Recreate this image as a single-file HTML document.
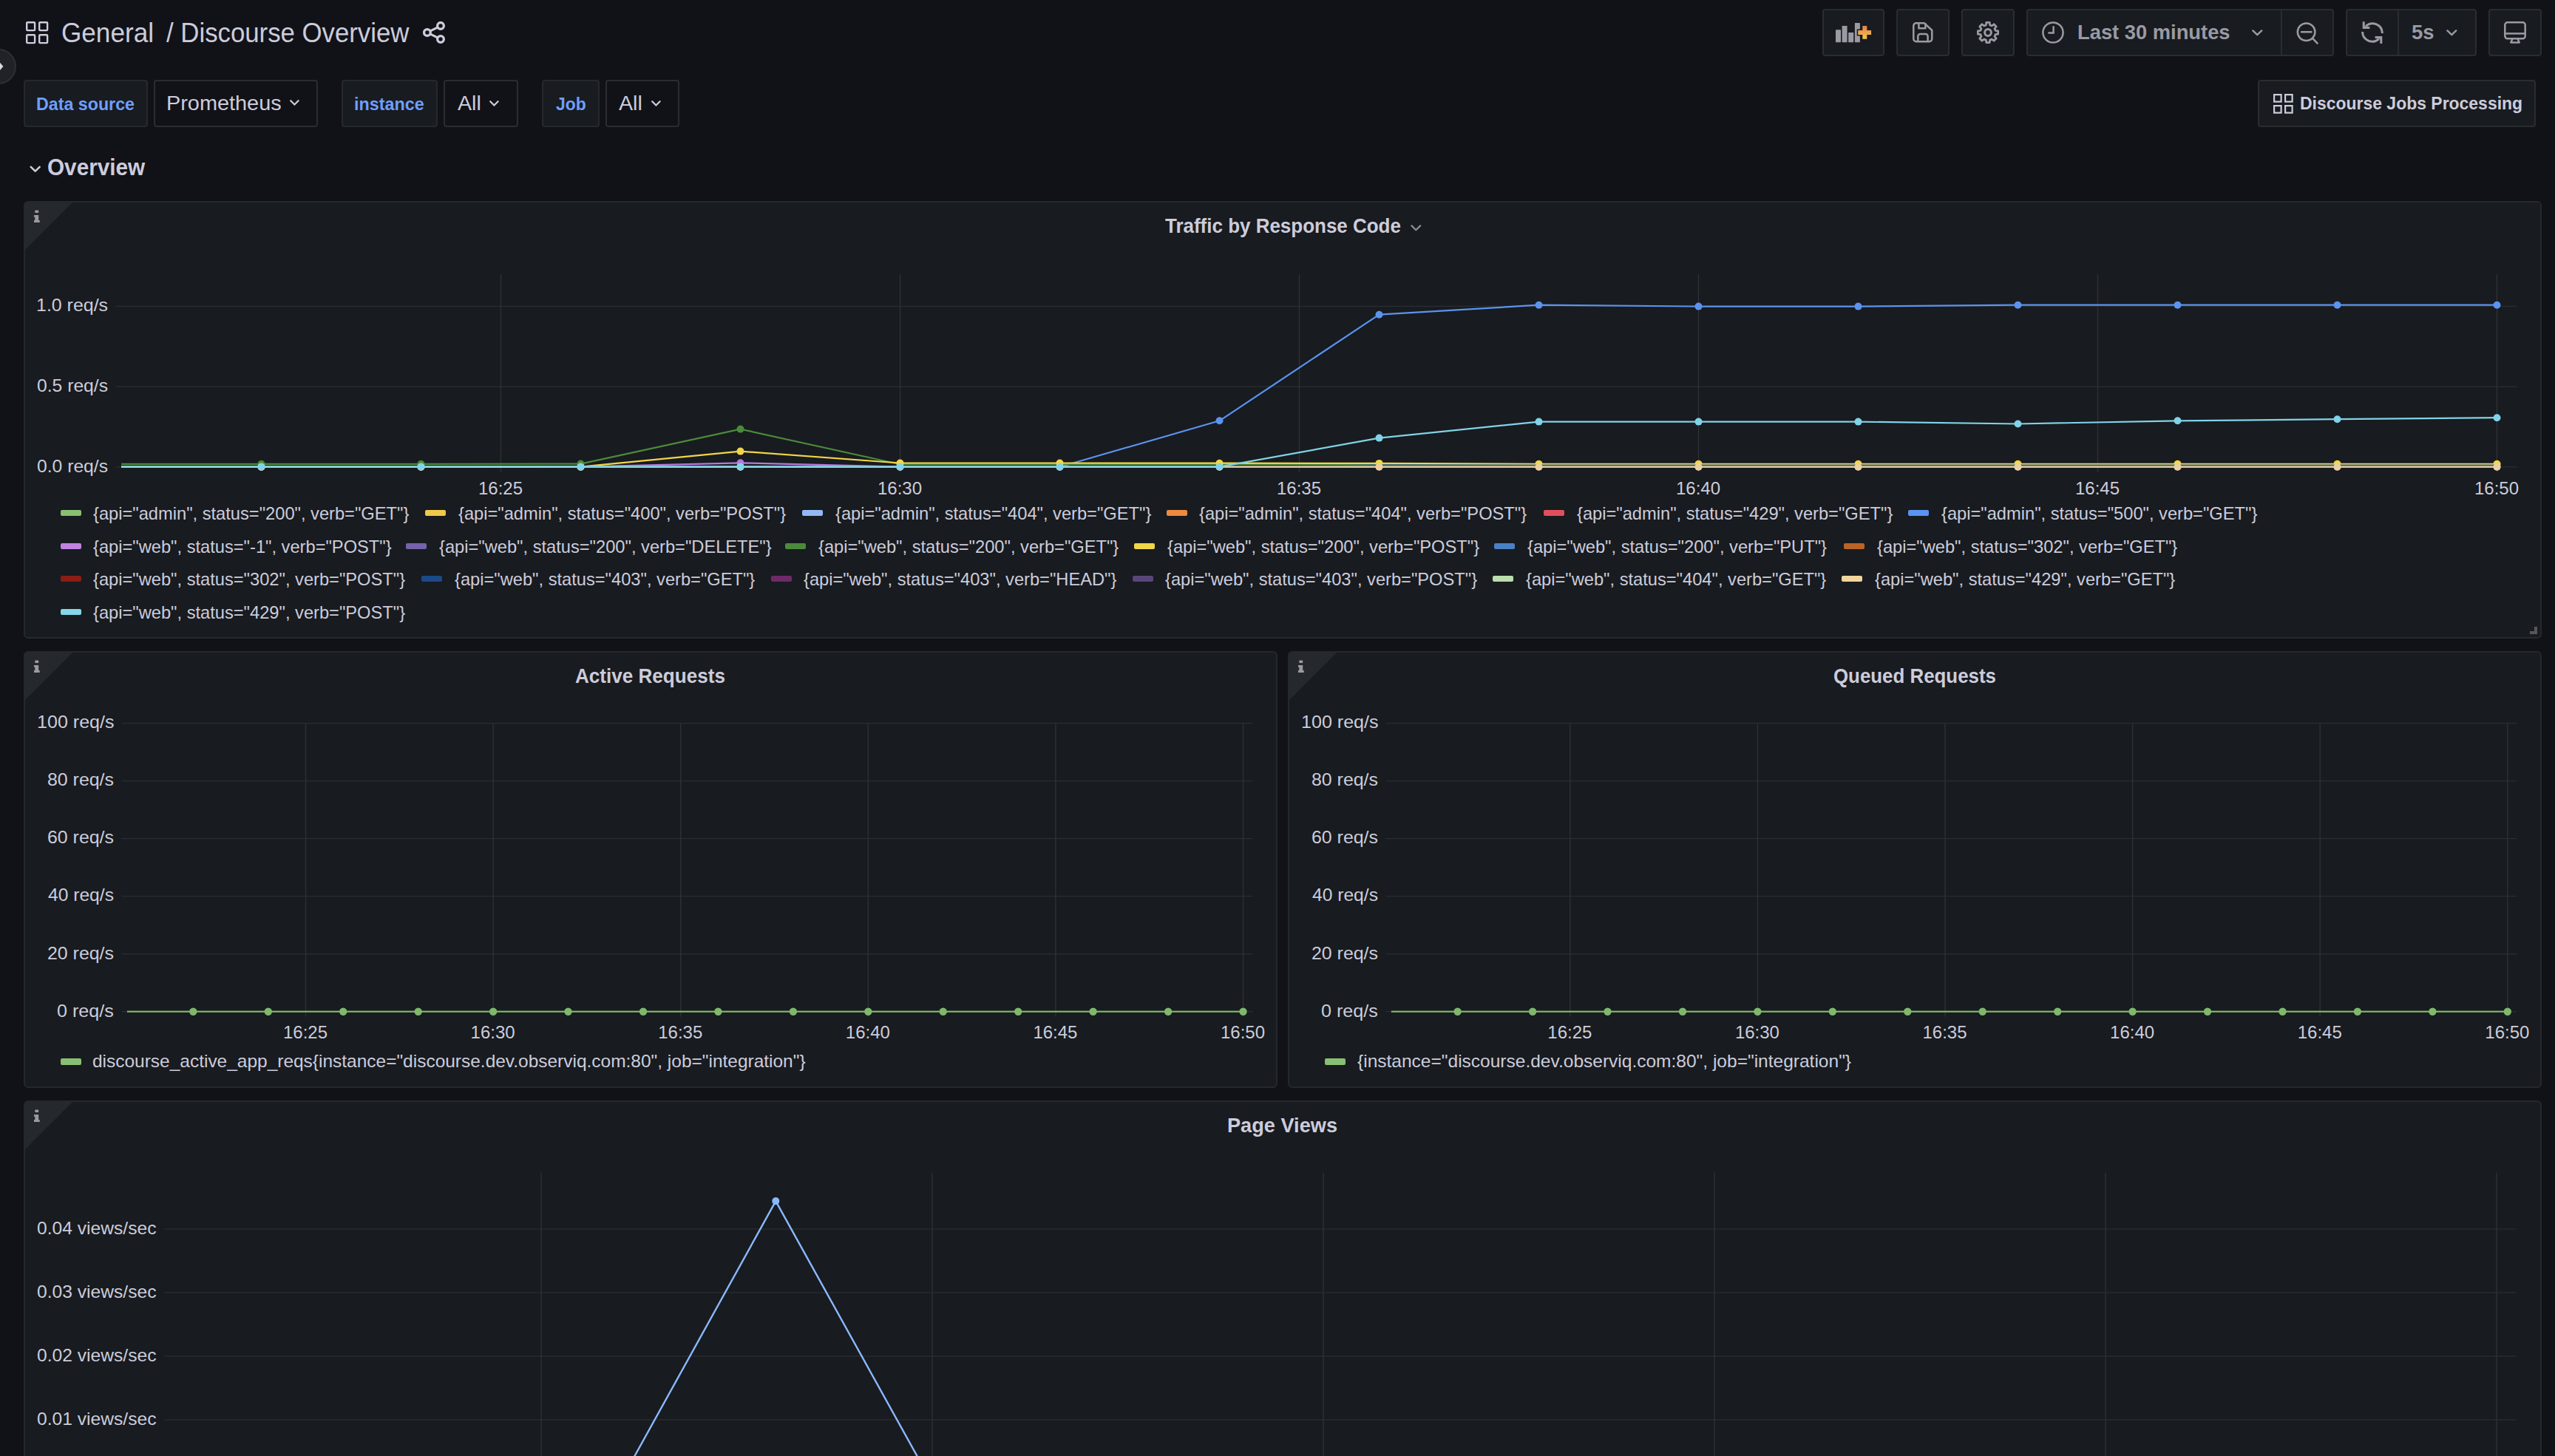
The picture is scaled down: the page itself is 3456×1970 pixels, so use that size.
<!DOCTYPE html>
<html><head><meta charset="utf-8"><title>Discourse Overview - Dashboards - Grafana</title>
<style>
html,body{margin:0;padding:0;width:3456px;height:1970px;overflow:hidden;background:#111217;}
body{position:relative;font-family:"Liberation Sans", sans-serif;}
.t{position:absolute;white-space:pre;font-family:"Liberation Sans", sans-serif;}
</style></head><body>
<svg style="position:absolute;left:35px;top:29px;" width="31" height="31" viewBox="0 0 31 31"><rect x="1.2" y="1.2" width="10.9" height="10.9" rx="1" fill="none" stroke="#ccccdc" stroke-width="2.4"/><rect x="18.2" y="1.2" width="10.9" height="10.9" rx="1" fill="none" stroke="#ccccdc" stroke-width="2.4"/><rect x="1.2" y="18.2" width="10.9" height="10.9" rx="1" fill="none" stroke="#ccccdc" stroke-width="2.4"/><rect x="18.2" y="18.2" width="10.9" height="10.9" rx="1" fill="none" stroke="#ccccdc" stroke-width="2.4"/></svg><svg style="position:absolute;left:572px;top:29px;" width="31" height="31" viewBox="0 0 31 31"><g fill="none" stroke="#ccccdc" stroke-width="3.3"><circle cx="24" cy="5.9" r="4.35"/><circle cx="5.9" cy="15" r="4.35"/><circle cx="24" cy="24" r="4.35"/><path d="M9.6 13.1 L20.3 7.9 M9.6 16.9 L20.3 22.1" stroke-width="3"/></g></svg><div style="position:absolute;left:-26px;top:66px;width:48px;height:48px;box-sizing:border-box;border-radius:50%;background:#202227;border:2px solid #2d2f35"></div><svg style="position:absolute;left:0px;top:82px;" width="8" height="16" viewBox="0 0 8 16"><path d="M-1 1.6 L3.9 7.2 Q4.6 7.9 3.9 8.6 L-1 14.2 Z" fill="#d8d8e2"/></svg><div style="position:absolute;left:2465px;top:12px;width:84px;height:64px;box-sizing:border-box;background:#181b1f;border:2px solid #2a2c32;border-radius:4px;"></div><div style="position:absolute;left:2565px;top:12px;width:72px;height:64px;box-sizing:border-box;background:#181b1f;border:2px solid #2a2c32;border-radius:4px;"></div><div style="position:absolute;left:2653px;top:12px;width:72px;height:64px;box-sizing:border-box;background:#181b1f;border:2px solid #2a2c32;border-radius:4px;"></div><div style="position:absolute;left:2741px;top:12px;width:416px;height:64px;box-sizing:border-box;background:#181b1f;border:2px solid #2a2c32;border-radius:4px;"></div><div style="position:absolute;left:3085px;top:13px;width:2px;height:62px;background:#2a2c32"></div><div style="position:absolute;left:3173px;top:12px;width:177px;height:64px;box-sizing:border-box;background:#181b1f;border:2px solid #2a2c32;border-radius:4px;"></div><div style="position:absolute;left:3242.6px;top:13px;width:2px;height:62px;background:#2a2c32"></div><div style="position:absolute;left:3366px;top:12px;width:72px;height:64px;box-sizing:border-box;background:#181b1f;border:2px solid #2a2c32;border-radius:4px;"></div><svg style="position:absolute;left:2483px;top:31px;" width="50" height="28" viewBox="0 0 50 28"><defs><linearGradient id="gp" x1="0" y1="0" x2="0" y2="1"><stop offset="0" stop-color="#e67f48"/><stop offset="0.5" stop-color="#eba34c"/><stop offset="1" stop-color="#f7ca48"/></linearGradient></defs><g fill="#9a9aa4"><rect x="0" y="9.2" width="7" height="17" rx="0.6"/><rect x="8.6" y="4" width="7" height="22.2" rx="0.6"/><rect x="17.2" y="13" width="7" height="13.2" rx="0.6"/><rect x="25.9" y="0.1" width="7" height="26.1" rx="0.6"/></g><path d="M28.7 8.4 h6.1 v-6 h9 v6 h5.8 v9.2 h-5.8 v5.7 h-9 v-5.7 h-6.1 z" fill="#181b1f"/><path d="M30.2 9.9 h6.1 v-6 h6 v6 h5.8 v6.2 h-5.8 v5.7 h-6 v-5.7 h-6.1 z" fill="url(#gp)"/></svg><svg style="position:absolute;left:2587px;top:30px;" width="28" height="28" viewBox="0 0 28 28"><g fill="none" stroke="#9a9aa4" stroke-width="2.5" stroke-linejoin="round"><path d="M4.4 1.3 H16 L26.3 11 V22.6 A3.6 3.6 0 0 1 22.7 26.2 H4.9 A3.6 3.6 0 0 1 1.3 22.6 V4.9 A3.6 3.6 0 0 1 4.9 1.3 Z"/><path d="M8.4 1.3 V8.2 H17.4 V1.3"/><path d="M7.3 26.2 V19 A3 3 0 0 1 10.3 16 H17.6 A3 3 0 0 1 20.6 19 V26.2"/></g></svg><svg style="position:absolute;left:2673.8px;top:29.2px;" width="30" height="30" viewBox="0 0 30 30"><g fill="none" stroke="#9a9aa4" stroke-width="2.8" stroke-linejoin="round"><path d="M12.33 4.95 L12.80 1.38 L17.20 1.38 L17.67 4.95 L20.22 6.00 L23.08 3.81 L26.19 6.92 L24.00 9.78 L25.05 12.33 L28.62 12.80 L28.62 17.20 L25.05 17.67 L24.00 20.22 L26.19 23.08 L23.08 26.19 L20.22 24.00 L17.67 25.05 L17.20 28.62 L12.80 28.62 L12.33 25.05 L9.78 24.00 L6.92 26.19 L3.81 23.08 L6.00 20.22 L4.95 17.67 L1.38 17.20 L1.38 12.80 L4.95 12.33 L6.00 9.78 L3.81 6.92 L6.92 3.81 L9.78 6.00 Z"/><circle cx="15" cy="15" r="4.4" stroke-width="3"/></g></svg><svg style="position:absolute;left:2762px;top:29px;" width="30" height="30" viewBox="0 0 30 30"><g fill="none" stroke="#9a9aa4" stroke-width="2.5" stroke-linecap="round"><circle cx="15" cy="15" r="13.6"/><path d="M15.6 7.2 V15.6 H9.4"/></g></svg><svg style="position:absolute;left:3045.5px;top:39.5px;" width="15" height="9.5" viewBox="0 0 15 9.5"><path d="M1.4 1.4 L7.3 7.2 L13.2 1.4" fill="none" stroke="#9a9aa4" stroke-width="2.4" stroke-linecap="round" stroke-linejoin="round"/></svg><svg style="position:absolute;left:3106px;top:30px;" width="31" height="31" viewBox="0 0 31 31"><g fill="none" stroke="#9a9aa4" stroke-width="2.5" stroke-linecap="round"><circle cx="13.6" cy="13.2" r="11.8"/><path d="M7 13.2 H20.4 M22.6 22.4 L28.6 28.6"/></g></svg><svg style="position:absolute;left:3194px;top:29px;" width="30" height="30" viewBox="0 0 30 30"><g fill="none" stroke="#9a9aa4" stroke-width="3" stroke-linejoin="miter"><path d="M6.2 6.4 A13.2 13.2 0 0 1 28.4 16"/><path d="M1.6 14 A13.2 13.2 0 0 0 23.8 23.6"/><path d="M3.2 0.3 V8.6 H11.4"/><path d="M26.8 29.9 V21.4 H18.6"/></g><g fill="#9a9aa4"><path d="M3.2 4 L3.2 10 L9 10 Z"/><path d="M26.8 26 L26.8 20 L21 20 Z"/></g></svg><svg style="position:absolute;left:3309px;top:39.5px;" width="15" height="9.5" viewBox="0 0 15 9.5"><path d="M1.4 1.4 L7.3 7.2 L13.2 1.4" fill="none" stroke="#9a9aa4" stroke-width="2.4" stroke-linecap="round" stroke-linejoin="round"/></svg><svg style="position:absolute;left:3387px;top:29px;" width="30" height="30" viewBox="0 0 30 30"><g fill="none" stroke="#9a9aa4" stroke-width="2.5" stroke-linejoin="round"><rect x="1.3" y="1.3" width="27.4" height="22" rx="3.5"/><path d="M1.3 16.4 H28.7"/><path d="M11.5 23.6 L9.3 28.4 H20.7 L18.5 23.6"/></g></svg><div style="position:absolute;left:32px;top:108px;width:168px;height:64px;box-sizing:border-box;background:#181b1f;border:2px solid #26282d;border-radius:4px;"></div><div style="position:absolute;left:208px;top:108px;width:222px;height:64px;box-sizing:border-box;background:#111217;border:2px solid #2a2c32;border-radius:4px;"></div><svg style="position:absolute;left:392px;top:135px;" width="14" height="10" viewBox="0 0 14 10"><path d="M1.2 1.2 L6.4 6.6 L11.6 1.2" fill="none" stroke="#ccccdc" stroke-width="2.2" stroke-linecap="round" stroke-linejoin="round"/></svg><div style="position:absolute;left:462px;top:108px;width:130px;height:64px;box-sizing:border-box;background:#181b1f;border:2px solid #26282d;border-radius:4px;"></div><div style="position:absolute;left:600px;top:108px;width:101px;height:64px;box-sizing:border-box;background:#111217;border:2px solid #2a2c32;border-radius:4px;"></div><svg style="position:absolute;left:662px;top:135.5px;" width="14" height="10" viewBox="0 0 14 10"><path d="M1.2 1.2 L6.4 6.6 L11.6 1.2" fill="none" stroke="#ccccdc" stroke-width="2.2" stroke-linecap="round" stroke-linejoin="round"/></svg><div style="position:absolute;left:733px;top:108px;width:78px;height:64px;box-sizing:border-box;background:#181b1f;border:2px solid #26282d;border-radius:4px;"></div><div style="position:absolute;left:819px;top:108px;width:100px;height:64px;box-sizing:border-box;background:#111217;border:2px solid #2a2c32;border-radius:4px;"></div><svg style="position:absolute;left:880.5px;top:135.5px;" width="14" height="10" viewBox="0 0 14 10"><path d="M1.2 1.2 L6.4 6.6 L11.6 1.2" fill="none" stroke="#ccccdc" stroke-width="2.2" stroke-linecap="round" stroke-linejoin="round"/></svg><div style="position:absolute;left:3054px;top:108px;width:376px;height:64px;box-sizing:border-box;background:#181b1f;border:2px solid #2a2c32;border-radius:4px;"></div><svg style="position:absolute;left:3074.5px;top:126.8px;" width="27" height="27" viewBox="0 0 27 27"><rect x="1.1" y="1.1" width="9.5" height="9.5" fill="none" stroke="#ccccdc" stroke-width="2.2"/><rect x="16.1" y="1.1" width="9.5" height="9.5" fill="none" stroke="#ccccdc" stroke-width="2.2"/><rect x="1.1" y="16.1" width="9.5" height="9.5" fill="none" stroke="#ccccdc" stroke-width="2.2"/><rect x="16.1" y="16.1" width="9.5" height="9.5" fill="none" stroke="#ccccdc" stroke-width="2.2"/></svg><svg style="position:absolute;left:40px;top:223.5px;" width="16" height="11" viewBox="0 0 16 11"><path d="M1.8 1.8 L7.7 7.7 L13.6 1.8" fill="none" stroke="#ccccdc" stroke-width="2.6" stroke-linecap="round" stroke-linejoin="round"/></svg><div style="position:absolute;left:32px;top:272px;width:3406px;height:592px;box-sizing:border-box;background:#181b1f;border:2px solid #25282d;border-radius:6px;"></div><svg style="position:absolute;left:32px;top:272px;" width="70" height="70" viewBox="0 0 70 70"><path d="M2 5 A3 3 0 0 1 5 2 H66 L2 66 Z" fill="#25282d"/><g fill="#9a9aa4"><rect x="15.3" y="12.4" width="4.9" height="3.6" rx="0.8"/><path d="M14 18.9 H20.2 V26 H21.7 V28.9 H14 V26 H15.3 V21.8 H14 Z"/></g></svg><svg style="position:absolute;left:3420px;top:846px;" width="14" height="14" viewBox="0 0 14 14"><path d="M8 2 H12 V12 H2 V8 H8 Z" fill="#575757"/></svg><svg style="position:absolute;left:1908px;top:303.5px;" width="15" height="9.5" viewBox="0 0 15 9.5"><path d="M1.4 1.4 L7.3 7.2 L13.2 1.4" fill="none" stroke="#8e8e98" stroke-width="2.2" stroke-linecap="round" stroke-linejoin="round"/></svg><svg style="position:absolute;left:0px;top:0px;pointer-events:none" width="3456" height="900" viewBox="0 0 3456 900"><rect x="156.5" y="413.7" width="3248.0" height="1.4" fill="#292c30"/><rect x="156.5" y="522.5" width="3248.0" height="1.4" fill="#292c30"/><rect x="156.5" y="631.0" width="3248.0" height="1.4" fill="#292c30"/><rect x="676.8" y="371" width="1.4" height="268" fill="#2d3135"/><rect x="1216.8" y="371" width="1.4" height="268" fill="#2d3135"/><rect x="1756.8" y="371" width="1.4" height="268" fill="#2d3135"/><rect x="2296.8" y="371" width="1.4" height="268" fill="#2d3135"/><rect x="2836.8" y="371" width="1.4" height="268" fill="#2d3135"/><rect x="3376.8" y="371" width="1.4" height="268" fill="#2d3135"/><path d="M164 631.7 L353.5 631.7 L569.5 631.7 L785.5 631.7 L1001.5 631.7 L1217.5 631.7 L1433.5 631.7 L1649.5 569.3 L1865.5 425.7 L2081.5 412.7 L2297.5 414.6 L2513.5 414.6 L2729.5 412.7 L2945.5 412.7 L3161.5 412.7 L3377.5 412.7" fill="none" stroke="#5b93f0" stroke-width="2.2" stroke-linejoin="round"/><circle cx="353.5" cy="631.7" r="5" fill="#5b93f0"/><circle cx="569.5" cy="631.7" r="5" fill="#5b93f0"/><circle cx="785.5" cy="631.7" r="5" fill="#5b93f0"/><circle cx="1001.5" cy="631.7" r="5" fill="#5b93f0"/><circle cx="1217.5" cy="631.7" r="5" fill="#5b93f0"/><circle cx="1433.5" cy="631.7" r="5" fill="#5b93f0"/><circle cx="1649.5" cy="569.3" r="5" fill="#5b93f0"/><circle cx="1865.5" cy="425.7" r="5" fill="#5b93f0"/><circle cx="2081.5" cy="412.7" r="5" fill="#5b93f0"/><circle cx="2297.5" cy="414.6" r="5" fill="#5b93f0"/><circle cx="2513.5" cy="414.6" r="5" fill="#5b93f0"/><circle cx="2729.5" cy="412.7" r="5" fill="#5b93f0"/><circle cx="2945.5" cy="412.7" r="5" fill="#5b93f0"/><circle cx="3161.5" cy="412.7" r="5" fill="#5b93f0"/><circle cx="3377.5" cy="412.7" r="5" fill="#5b93f0"/><path d="M164 631.7 L353.5 631.7 L569.5 631.7 L785.5 631.7 L1001.5 626.3 L1217.5 631.7 L1433.5 631.7 L1649.5 631.7 L1865.5 631.7 L2081.5 631.7 L2297.5 631.7 L2513.5 631.7 L2729.5 631.7 L2945.5 631.7 L3161.5 631.7 L3377.5 631.7" fill="none" stroke="#b27bdc" stroke-width="2.2" stroke-linejoin="round"/><circle cx="353.5" cy="631.7" r="5" fill="#b27bdc"/><circle cx="569.5" cy="631.7" r="5" fill="#b27bdc"/><circle cx="785.5" cy="631.7" r="5" fill="#b27bdc"/><circle cx="1001.5" cy="626.3" r="5" fill="#b27bdc"/><circle cx="1217.5" cy="631.7" r="5" fill="#b27bdc"/><circle cx="1433.5" cy="631.7" r="5" fill="#b27bdc"/><circle cx="1649.5" cy="631.7" r="5" fill="#b27bdc"/><circle cx="1865.5" cy="631.7" r="5" fill="#b27bdc"/><circle cx="2081.5" cy="631.7" r="5" fill="#b27bdc"/><circle cx="2297.5" cy="631.7" r="5" fill="#b27bdc"/><circle cx="2513.5" cy="631.7" r="5" fill="#b27bdc"/><circle cx="2729.5" cy="631.7" r="5" fill="#b27bdc"/><circle cx="2945.5" cy="631.7" r="5" fill="#b27bdc"/><circle cx="3161.5" cy="631.7" r="5" fill="#b27bdc"/><circle cx="3377.5" cy="631.7" r="5" fill="#b27bdc"/><path d="M164 627.8 L353.5 627.8 L569.5 627.8 L785.5 627.6 L1001.5 580.6 L1217.5 628.2 L1433.5 628.2 L1649.5 628.2 L1865.5 628.2 L2081.5 628.2 L2297.5 628.2 L2513.5 628.2 L2729.5 628.2 L2945.5 628.2 L3161.5 628.2 L3377.5 628.2" fill="none" stroke="#4b8a3c" stroke-width="2.2" stroke-linejoin="round"/><circle cx="353.5" cy="627.8" r="5" fill="#4b8a3c"/><circle cx="569.5" cy="627.8" r="5" fill="#4b8a3c"/><circle cx="785.5" cy="627.6" r="5" fill="#4b8a3c"/><circle cx="1001.5" cy="580.6" r="5" fill="#4b8a3c"/><circle cx="1217.5" cy="628.2" r="5" fill="#4b8a3c"/><circle cx="1433.5" cy="628.2" r="5" fill="#4b8a3c"/><circle cx="1649.5" cy="628.2" r="5" fill="#4b8a3c"/><circle cx="1865.5" cy="628.2" r="5" fill="#4b8a3c"/><circle cx="2081.5" cy="628.2" r="5" fill="#4b8a3c"/><circle cx="2297.5" cy="628.2" r="5" fill="#4b8a3c"/><circle cx="2513.5" cy="628.2" r="5" fill="#4b8a3c"/><circle cx="2729.5" cy="628.2" r="5" fill="#4b8a3c"/><circle cx="2945.5" cy="628.2" r="5" fill="#4b8a3c"/><circle cx="3161.5" cy="628.2" r="5" fill="#4b8a3c"/><circle cx="3377.5" cy="628.2" r="5" fill="#4b8a3c"/><path d="M164 631.7 L353.5 631.7 L569.5 631.7 L785.5 631.7 L1001.5 610.6 L1217.5 626.5 L1433.5 626.5 L1649.5 626.7 L1865.5 626.9 L2081.5 627.8 L2297.5 627.8 L2513.5 627.8 L2729.5 627.8 L2945.5 627.8 L3161.5 627.8 L3377.5 627.8" fill="none" stroke="#f0d648" stroke-width="2.2" stroke-linejoin="round"/><circle cx="353.5" cy="631.7" r="5" fill="#f0d648"/><circle cx="569.5" cy="631.7" r="5" fill="#f0d648"/><circle cx="785.5" cy="631.7" r="5" fill="#f0d648"/><circle cx="1001.5" cy="610.6" r="5" fill="#f0d648"/><circle cx="1217.5" cy="626.5" r="5" fill="#f0d648"/><circle cx="1433.5" cy="626.5" r="5" fill="#f0d648"/><circle cx="1649.5" cy="626.7" r="5" fill="#f0d648"/><circle cx="1865.5" cy="626.9" r="5" fill="#f0d648"/><circle cx="2081.5" cy="627.8" r="5" fill="#f0d648"/><circle cx="2297.5" cy="627.8" r="5" fill="#f0d648"/><circle cx="2513.5" cy="627.8" r="5" fill="#f0d648"/><circle cx="2729.5" cy="627.8" r="5" fill="#f0d648"/><circle cx="2945.5" cy="627.8" r="5" fill="#f0d648"/><circle cx="3161.5" cy="627.8" r="5" fill="#f0d648"/><circle cx="3377.5" cy="627.8" r="5" fill="#f0d648"/><path d="M164 631.7 L353.5 631.7 L569.5 631.7 L785.5 631.7 L1001.5 631.7 L1217.5 631.7 L1433.5 631.7 L1649.5 631.7 L1865.5 629.7 L2081.5 629.7 L2297.5 629.7 L2513.5 629.7 L2729.5 629.7 L2945.5 629.7 L3161.5 629.7 L3377.5 629.7" fill="none" stroke="#2a5a9c" stroke-width="2.2" stroke-linejoin="round"/><path d="M164 631.7 L353.5 631.7 L569.5 631.7 L785.5 631.7 L1001.5 631.7 L1217.5 631.7 L1433.5 631.7 L1649.5 631.7 L1865.5 631.7 L2081.5 631.7 L2297.5 631.7 L2513.5 631.7 L2729.5 631.7 L2945.5 631.7 L3161.5 631.7 L3377.5 631.7" fill="none" stroke="#ebd19c" stroke-width="2.2" stroke-linejoin="round"/><circle cx="353.5" cy="631.7" r="5" fill="#ebd19c"/><circle cx="569.5" cy="631.7" r="5" fill="#ebd19c"/><circle cx="785.5" cy="631.7" r="5" fill="#ebd19c"/><circle cx="1001.5" cy="631.7" r="5" fill="#ebd19c"/><circle cx="1217.5" cy="631.7" r="5" fill="#ebd19c"/><circle cx="1433.5" cy="631.7" r="5" fill="#ebd19c"/><circle cx="1649.5" cy="631.7" r="5" fill="#ebd19c"/><circle cx="1865.5" cy="631.7" r="5" fill="#ebd19c"/><circle cx="2081.5" cy="631.7" r="5" fill="#ebd19c"/><circle cx="2297.5" cy="631.7" r="5" fill="#ebd19c"/><circle cx="2513.5" cy="631.7" r="5" fill="#ebd19c"/><circle cx="2729.5" cy="631.7" r="5" fill="#ebd19c"/><circle cx="2945.5" cy="631.7" r="5" fill="#ebd19c"/><circle cx="3161.5" cy="631.7" r="5" fill="#ebd19c"/><circle cx="3377.5" cy="631.7" r="5" fill="#ebd19c"/><path d="M164 631.7 L353.5 631.7 L569.5 631.7 L785.5 631.7 L1001.5 631.7 L1217.5 631.7 L1433.5 631.7 L1649.5 631.7 L1865.5 592.6 L2081.5 570.6 L2297.5 570.6 L2513.5 570.6 L2729.5 573.5 L2945.5 569.3 L3161.5 567.2 L3377.5 565.2" fill="none" stroke="#80d3e8" stroke-width="2.2" stroke-linejoin="round"/><circle cx="353.5" cy="631.7" r="5" fill="#80d3e8"/><circle cx="569.5" cy="631.7" r="5" fill="#80d3e8"/><circle cx="785.5" cy="631.7" r="5" fill="#80d3e8"/><circle cx="1001.5" cy="631.7" r="5" fill="#80d3e8"/><circle cx="1217.5" cy="631.7" r="5" fill="#80d3e8"/><circle cx="1433.5" cy="631.7" r="5" fill="#80d3e8"/><circle cx="1649.5" cy="631.7" r="5" fill="#80d3e8"/><circle cx="1865.5" cy="592.6" r="5" fill="#80d3e8"/><circle cx="2081.5" cy="570.6" r="5" fill="#80d3e8"/><circle cx="2297.5" cy="570.6" r="5" fill="#80d3e8"/><circle cx="2513.5" cy="570.6" r="5" fill="#80d3e8"/><circle cx="2729.5" cy="573.5" r="5" fill="#80d3e8"/><circle cx="2945.5" cy="569.3" r="5" fill="#80d3e8"/><circle cx="3161.5" cy="567.2" r="5" fill="#80d3e8"/><circle cx="3377.5" cy="565.2" r="5" fill="#80d3e8"/></svg><div style="position:absolute;left:81.5px;top:690px;width:28.0px;height:8px;box-sizing:border-box;background:#89bf72;border-radius:2px;"></div><div style="position:absolute;left:575.3px;top:690px;width:28.0px;height:8px;box-sizing:border-box;background:#efc948;border-radius:2px;"></div><div style="position:absolute;left:1085.1px;top:690px;width:28.0px;height:8px;box-sizing:border-box;background:#93b8f5;border-radius:2px;"></div><div style="position:absolute;left:1577.9px;top:690px;width:28.0px;height:8px;box-sizing:border-box;background:#ef8a3e;border-radius:2px;"></div><div style="position:absolute;left:2088px;top:690px;width:28px;height:8px;box-sizing:border-box;background:#e0505c;border-radius:2px;"></div><div style="position:absolute;left:2581px;top:690px;width:28px;height:8px;box-sizing:border-box;background:#5b93f0;border-radius:2px;"></div><div style="position:absolute;left:81.5px;top:734.6px;width:28.0px;height:8.0px;box-sizing:border-box;background:#c183e0;border-radius:2px;"></div><div style="position:absolute;left:549.1px;top:734.6px;width:28.0px;height:8.0px;box-sizing:border-box;background:#7562aa;border-radius:2px;"></div><div style="position:absolute;left:1062.3px;top:734.6px;width:28.0px;height:8.0px;box-sizing:border-box;background:#4b8a3c;border-radius:2px;"></div><div style="position:absolute;left:1534px;top:734.6px;width:28px;height:8.0px;box-sizing:border-box;background:#f0d648;border-radius:2px;"></div><div style="position:absolute;left:2021.3px;top:734.6px;width:28.000000000000227px;height:8.0px;box-sizing:border-box;background:#4a80c4;border-radius:2px;"></div><div style="position:absolute;left:2494px;top:734.6px;width:28px;height:8.0px;box-sizing:border-box;background:#bb6326;border-radius:2px;"></div><div style="position:absolute;left:81.5px;top:779.2px;width:28.0px;height:8.0px;box-sizing:border-box;background:#8c1d15;border-radius:2px;"></div><div style="position:absolute;left:570.2px;top:779.2px;width:28.0px;height:8.0px;box-sizing:border-box;background:#1c4a88;border-radius:2px;"></div><div style="position:absolute;left:1042.5px;top:779.2px;width:28.0px;height:8.0px;box-sizing:border-box;background:#6e2a68;border-radius:2px;"></div><div style="position:absolute;left:1531.8px;top:779.2px;width:28.0px;height:8.0px;box-sizing:border-box;background:#584679;border-radius:2px;"></div><div style="position:absolute;left:2019.2px;top:779.2px;width:28.0px;height:8.0px;box-sizing:border-box;background:#bcdcae;border-radius:2px;"></div><div style="position:absolute;left:2491px;top:779.2px;width:28px;height:8.0px;box-sizing:border-box;background:#f1d59c;border-radius:2px;"></div><div style="position:absolute;left:81.5px;top:823.8px;width:28.0px;height:8.0px;box-sizing:border-box;background:#84d7eb;border-radius:2px;"></div><div style="position:absolute;left:32px;top:881px;width:1696px;height:591px;box-sizing:border-box;background:#181b1f;border:2px solid #25282d;border-radius:6px;"></div><svg style="position:absolute;left:32px;top:881px;" width="70" height="70" viewBox="0 0 70 70"><path d="M2 5 A3 3 0 0 1 5 2 H66 L2 66 Z" fill="#25282d"/><g fill="#9a9aa4"><rect x="15.3" y="12.4" width="4.9" height="3.6" rx="0.8"/><path d="M14 18.9 H20.2 V26 H21.7 V28.9 H14 V26 H15.3 V21.8 H14 Z"/></g></svg><svg style="position:absolute;left:0px;top:0px;pointer-events:none" width="3456" height="1480" viewBox="0 0 3456 1480"><rect x="164.4" y="977.9" width="1530" height="1.4" fill="#292c30"/><rect x="164.4" y="1055.8999999999999" width="1530" height="1.4" fill="#292c30"/><rect x="164.4" y="1133.8999999999999" width="1530" height="1.4" fill="#292c30"/><rect x="164.4" y="1211.8999999999999" width="1530" height="1.4" fill="#292c30"/><rect x="164.4" y="1290.0" width="1530" height="1.4" fill="#292c30"/><rect x="164.4" y="1368.0" width="1530" height="1.4" fill="#292c30"/><rect x="412.8" y="978.6" width="1.4" height="397" fill="#2d3135"/><rect x="666.4" y="978.6" width="1.4" height="397" fill="#2d3135"/><rect x="920.0" y="978.6" width="1.4" height="397" fill="#2d3135"/><rect x="1173.6" y="978.6" width="1.4" height="397" fill="#2d3135"/><rect x="1427.2" y="978.6" width="1.4" height="397" fill="#2d3135"/><rect x="1680.8" y="978.6" width="1.4" height="397" fill="#2d3135"/><rect x="171.9" y="1367.6" width="1509.6" height="2.2" fill="#7fb86a"/><circle cx="261.3" cy="1368.7" r="5.2" fill="#7fb86a"/><circle cx="362.8" cy="1368.7" r="5.2" fill="#7fb86a"/><circle cx="464.2" cy="1368.7" r="5.2" fill="#7fb86a"/><circle cx="565.7" cy="1368.7" r="5.2" fill="#7fb86a"/><circle cx="667.1" cy="1368.7" r="5.2" fill="#7fb86a"/><circle cx="768.5" cy="1368.7" r="5.2" fill="#7fb86a"/><circle cx="870.0" cy="1368.7" r="5.2" fill="#7fb86a"/><circle cx="971.4" cy="1368.7" r="5.2" fill="#7fb86a"/><circle cx="1072.9" cy="1368.7" r="5.2" fill="#7fb86a"/><circle cx="1174.3" cy="1368.7" r="5.2" fill="#7fb86a"/><circle cx="1275.7" cy="1368.7" r="5.2" fill="#7fb86a"/><circle cx="1377.2" cy="1368.7" r="5.2" fill="#7fb86a"/><circle cx="1478.6" cy="1368.7" r="5.2" fill="#7fb86a"/><circle cx="1580.1" cy="1368.7" r="5.2" fill="#7fb86a"/><circle cx="1681.5" cy="1368.7" r="5.2" fill="#7fb86a"/></svg><div style="position:absolute;left:81.7px;top:1432px;width:28.200000000000003px;height:8.5px;box-sizing:border-box;background:#89bf72;border-radius:2px;"></div><div style="position:absolute;left:1742px;top:881px;width:1696px;height:591px;box-sizing:border-box;background:#181b1f;border:2px solid #25282d;border-radius:6px;"></div><svg style="position:absolute;left:1742px;top:881px;" width="70" height="70" viewBox="0 0 70 70"><path d="M2 5 A3 3 0 0 1 5 2 H66 L2 66 Z" fill="#25282d"/><g fill="#9a9aa4"><rect x="15.3" y="12.4" width="4.9" height="3.6" rx="0.8"/><path d="M14 18.9 H20.2 V26 H21.7 V28.9 H14 V26 H15.3 V21.8 H14 Z"/></g></svg><svg style="position:absolute;left:0px;top:0px;pointer-events:none" width="3456" height="1480" viewBox="0 0 3456 1480"><rect x="1874.4" y="977.9" width="1530" height="1.4" fill="#292c30"/><rect x="1874.4" y="1055.8999999999999" width="1530" height="1.4" fill="#292c30"/><rect x="1874.4" y="1133.8999999999999" width="1530" height="1.4" fill="#292c30"/><rect x="1874.4" y="1211.8999999999999" width="1530" height="1.4" fill="#292c30"/><rect x="1874.4" y="1290.0" width="1530" height="1.4" fill="#292c30"/><rect x="1874.4" y="1368.0" width="1530" height="1.4" fill="#292c30"/><rect x="2123.1000000000004" y="978.6" width="1.4" height="397" fill="#2d3135"/><rect x="2376.7000000000003" y="978.6" width="1.4" height="397" fill="#2d3135"/><rect x="2630.3" y="978.6" width="1.4" height="397" fill="#2d3135"/><rect x="2883.9000000000005" y="978.6" width="1.4" height="397" fill="#2d3135"/><rect x="3137.5000000000005" y="978.6" width="1.4" height="397" fill="#2d3135"/><rect x="3391.1000000000004" y="978.6" width="1.4" height="397" fill="#2d3135"/><rect x="1881.9" y="1367.6" width="1509.9" height="2.2" fill="#7fb86a"/><circle cx="1971.6" cy="1368.7" r="5.2" fill="#7fb86a"/><circle cx="2073.1" cy="1368.7" r="5.2" fill="#7fb86a"/><circle cx="2174.5" cy="1368.7" r="5.2" fill="#7fb86a"/><circle cx="2276.0" cy="1368.7" r="5.2" fill="#7fb86a"/><circle cx="2377.4" cy="1368.7" r="5.2" fill="#7fb86a"/><circle cx="2478.8" cy="1368.7" r="5.2" fill="#7fb86a"/><circle cx="2580.3" cy="1368.7" r="5.2" fill="#7fb86a"/><circle cx="2681.7" cy="1368.7" r="5.2" fill="#7fb86a"/><circle cx="2783.2" cy="1368.7" r="5.2" fill="#7fb86a"/><circle cx="2884.6" cy="1368.7" r="5.2" fill="#7fb86a"/><circle cx="2986.0" cy="1368.7" r="5.2" fill="#7fb86a"/><circle cx="3087.5" cy="1368.7" r="5.2" fill="#7fb86a"/><circle cx="3188.9" cy="1368.7" r="5.2" fill="#7fb86a"/><circle cx="3290.4" cy="1368.7" r="5.2" fill="#7fb86a"/><circle cx="3391.8" cy="1368.7" r="5.2" fill="#7fb86a"/></svg><div style="position:absolute;left:1791.7px;top:1432px;width:28.200000000000045px;height:8.5px;box-sizing:border-box;background:#89bf72;border-radius:2px;"></div><div style="position:absolute;left:32px;top:1489px;width:3406px;height:611px;box-sizing:border-box;background:#181b1f;border:2px solid #25282d;border-radius:6px;"></div><svg style="position:absolute;left:32px;top:1489px;" width="70" height="70" viewBox="0 0 70 70"><path d="M2 5 A3 3 0 0 1 5 2 H66 L2 66 Z" fill="#25282d"/><g fill="#9a9aa4"><rect x="15.3" y="12.4" width="4.9" height="3.6" rx="0.8"/><path d="M14 18.9 H20.2 V26 H21.7 V28.9 H14 V26 H15.3 V21.8 H14 Z"/></g></svg><svg style="position:absolute;left:0px;top:0px;pointer-events:none" width="3456" height="1970" viewBox="0 0 3456 1970"><rect x="222.5" y="1662.2" width="3181.2" height="1.4" fill="#292c30"/><rect x="222.5" y="1748.2" width="3181.2" height="1.4" fill="#292c30"/><rect x="222.5" y="1834.3" width="3181.2" height="1.4" fill="#292c30"/><rect x="222.5" y="1920.3" width="3181.2" height="1.4" fill="#292c30"/><rect x="731.3" y="1586.7" width="1.4" height="400" fill="#2d3135"/><rect x="1260.3" y="1586.7" width="1.4" height="400" fill="#2d3135"/><rect x="1789.3" y="1586.7" width="1.4" height="400" fill="#2d3135"/><rect x="2318.3" y="1586.7" width="1.4" height="400" fill="#2d3135"/><rect x="2847.3" y="1586.7" width="1.4" height="400" fill="#2d3135"/><rect x="3376.3" y="1586.7" width="1.4" height="400" fill="#2d3135"/><path d="M838 2007 L1049.3 1625.1 L1261 2007" fill="none" stroke="#8ab8ff" stroke-width="2.4" stroke-linejoin="round"/><circle cx="1049.3" cy="1625.1" r="5" fill="#8ab8ff"/></svg>
<div class="t" style="left:83.35px;top:27.00px;font-size:36px;line-height:36px;font-weight:400;color:#ccccdc;transform:scaleX(0.9758);transform-origin:left top;">General</div><div class="t" style="left:224.60px;top:26.60px;font-size:36px;line-height:36px;font-weight:400;color:#ccccdc;transform:scaleX(0.9656);transform-origin:left top;">/ Discourse Overview</div><div class="t" style="left:2810.15px;top:30.40px;font-size:28px;line-height:28px;font-weight:700;color:#9a9aa4;transform:scaleX(0.9761);transform-origin:left top;">Last 30 minutes</div><div class="t" style="left:3261.52px;top:30.10px;font-size:28px;line-height:28px;font-weight:700;color:#9a9aa4;transform:scaleX(0.9793);transform-origin:left top;">5s</div><div class="t" style="left:48.96px;top:128.60px;font-size:24px;line-height:24px;font-weight:700;color:#6e9fff;transform:scaleX(0.9681);transform-origin:left top;">Data source</div><div class="t" style="left:224.94px;top:126.20px;font-size:28px;line-height:28px;font-weight:400;color:#ccccdc;transform:scaleX(1.0311);transform-origin:left top;">Prometheus</div><div class="t" style="left:479.46px;top:128.60px;font-size:24px;line-height:24px;font-weight:700;color:#6e9fff;transform:scaleX(0.9716);transform-origin:left top;">instance</div><div class="t" style="left:618.70px;top:126.20px;font-size:28px;line-height:28px;font-weight:400;color:#ccccdc;transform:scaleX(1.0233);transform-origin:left top;">All</div><div class="t" style="left:751.50px;top:128.60px;font-size:24px;line-height:24px;font-weight:700;color:#6e9fff;transform:scaleX(0.9548);transform-origin:left top;">Job</div><div class="t" style="left:837.00px;top:126.20px;font-size:28px;line-height:28px;font-weight:400;color:#ccccdc;transform:scaleX(1.0233);transform-origin:left top;">All</div><div class="t" style="left:3110.89px;top:128.40px;font-size:24px;line-height:24px;font-weight:700;color:#ccccdc;transform:scaleX(0.9564);transform-origin:left top;">Discourse Jobs Processing</div><div class="t" style="left:64.07px;top:209.80px;font-size:32px;line-height:32px;font-weight:700;color:#ccccdc;transform:scaleX(0.9289);transform-origin:left top;">Overview</div><div class="t" style="left:1575.95px;top:292.40px;font-size:28px;line-height:28px;font-weight:700;color:#ccccdc;transform:scaleX(0.9274);transform-origin:left top;">Traffic by Response Code</div><div class="t" style="left:48.72px;top:401.30px;font-size:24px;line-height:24px;font-weight:400;color:#ccccdc;transform:scaleX(1.0396);transform-origin:left top;">1.0 req/s</div><div class="t" style="left:49.77px;top:510.10px;font-size:24px;line-height:24px;font-weight:400;color:#ccccdc;transform:scaleX(1.0283);transform-origin:left top;">0.5 req/s</div><div class="t" style="left:49.77px;top:618.60px;font-size:24px;line-height:24px;font-weight:400;color:#ccccdc;transform:scaleX(1.0283);transform-origin:left top;">0.0 req/s</div><div class="t" style="left:647.00px;top:649.10px;font-size:24px;line-height:24px;font-weight:400;color:#ccccdc;">16:25</div><div class="t" style="left:1187.00px;top:649.10px;font-size:24px;line-height:24px;font-weight:400;color:#ccccdc;">16:30</div><div class="t" style="left:1727.00px;top:649.10px;font-size:24px;line-height:24px;font-weight:400;color:#ccccdc;">16:35</div><div class="t" style="left:2267.00px;top:649.10px;font-size:24px;line-height:24px;font-weight:400;color:#ccccdc;">16:40</div><div class="t" style="left:2807.00px;top:649.10px;font-size:24px;line-height:24px;font-weight:400;color:#ccccdc;">16:45</div><div class="t" style="left:3347.00px;top:649.10px;font-size:24px;line-height:24px;font-weight:400;color:#ccccdc;">16:50</div><div class="t" style="left:126.00px;top:683.20px;font-size:24px;line-height:24px;font-weight:400;color:#ccccdc;transform:scaleX(0.9860);transform-origin:left top;">{api=&quot;admin&quot;, status=&quot;200&quot;, verb=&quot;GET&quot;}</div><div class="t" style="left:619.80px;top:683.20px;font-size:24px;line-height:24px;font-weight:400;color:#ccccdc;transform:scaleX(0.9860);transform-origin:left top;">{api=&quot;admin&quot;, status=&quot;400&quot;, verb=&quot;POST&quot;}</div><div class="t" style="left:1129.60px;top:683.20px;font-size:24px;line-height:24px;font-weight:400;color:#ccccdc;transform:scaleX(0.9860);transform-origin:left top;">{api=&quot;admin&quot;, status=&quot;404&quot;, verb=&quot;GET&quot;}</div><div class="t" style="left:1622.40px;top:683.20px;font-size:24px;line-height:24px;font-weight:400;color:#ccccdc;transform:scaleX(0.9860);transform-origin:left top;">{api=&quot;admin&quot;, status=&quot;404&quot;, verb=&quot;POST&quot;}</div><div class="t" style="left:2132.50px;top:683.20px;font-size:24px;line-height:24px;font-weight:400;color:#ccccdc;transform:scaleX(0.9860);transform-origin:left top;">{api=&quot;admin&quot;, status=&quot;429&quot;, verb=&quot;GET&quot;}</div><div class="t" style="left:2625.50px;top:683.20px;font-size:24px;line-height:24px;font-weight:400;color:#ccccdc;transform:scaleX(0.9860);transform-origin:left top;">{api=&quot;admin&quot;, status=&quot;500&quot;, verb=&quot;GET&quot;}</div><div class="t" style="left:126.00px;top:727.80px;font-size:24px;line-height:24px;font-weight:400;color:#ccccdc;transform:scaleX(0.9860);transform-origin:left top;">{api=&quot;web&quot;, status=&quot;-1&quot;, verb=&quot;POST&quot;}</div><div class="t" style="left:593.60px;top:727.80px;font-size:24px;line-height:24px;font-weight:400;color:#ccccdc;transform:scaleX(0.9860);transform-origin:left top;">{api=&quot;web&quot;, status=&quot;200&quot;, verb=&quot;DELETE&quot;}</div><div class="t" style="left:1106.80px;top:727.80px;font-size:24px;line-height:24px;font-weight:400;color:#ccccdc;transform:scaleX(0.9860);transform-origin:left top;">{api=&quot;web&quot;, status=&quot;200&quot;, verb=&quot;GET&quot;}</div><div class="t" style="left:1578.50px;top:727.80px;font-size:24px;line-height:24px;font-weight:400;color:#ccccdc;transform:scaleX(0.9860);transform-origin:left top;">{api=&quot;web&quot;, status=&quot;200&quot;, verb=&quot;POST&quot;}</div><div class="t" style="left:2065.80px;top:727.80px;font-size:24px;line-height:24px;font-weight:400;color:#ccccdc;transform:scaleX(0.9860);transform-origin:left top;">{api=&quot;web&quot;, status=&quot;200&quot;, verb=&quot;PUT&quot;}</div><div class="t" style="left:2538.50px;top:727.80px;font-size:24px;line-height:24px;font-weight:400;color:#ccccdc;transform:scaleX(0.9860);transform-origin:left top;">{api=&quot;web&quot;, status=&quot;302&quot;, verb=&quot;GET&quot;}</div><div class="t" style="left:126.00px;top:772.40px;font-size:24px;line-height:24px;font-weight:400;color:#ccccdc;transform:scaleX(0.9860);transform-origin:left top;">{api=&quot;web&quot;, status=&quot;302&quot;, verb=&quot;POST&quot;}</div><div class="t" style="left:614.70px;top:772.40px;font-size:24px;line-height:24px;font-weight:400;color:#ccccdc;transform:scaleX(0.9860);transform-origin:left top;">{api=&quot;web&quot;, status=&quot;403&quot;, verb=&quot;GET&quot;}</div><div class="t" style="left:1087.00px;top:772.40px;font-size:24px;line-height:24px;font-weight:400;color:#ccccdc;transform:scaleX(0.9860);transform-origin:left top;">{api=&quot;web&quot;, status=&quot;403&quot;, verb=&quot;HEAD&quot;}</div><div class="t" style="left:1576.30px;top:772.40px;font-size:24px;line-height:24px;font-weight:400;color:#ccccdc;transform:scaleX(0.9860);transform-origin:left top;">{api=&quot;web&quot;, status=&quot;403&quot;, verb=&quot;POST&quot;}</div><div class="t" style="left:2063.70px;top:772.40px;font-size:24px;line-height:24px;font-weight:400;color:#ccccdc;transform:scaleX(0.9860);transform-origin:left top;">{api=&quot;web&quot;, status=&quot;404&quot;, verb=&quot;GET&quot;}</div><div class="t" style="left:2535.50px;top:772.40px;font-size:24px;line-height:24px;font-weight:400;color:#ccccdc;transform:scaleX(0.9860);transform-origin:left top;">{api=&quot;web&quot;, status=&quot;429&quot;, verb=&quot;GET&quot;}</div><div class="t" style="left:126.00px;top:817.00px;font-size:24px;line-height:24px;font-weight:400;color:#ccccdc;transform:scaleX(0.9860);transform-origin:left top;">{api=&quot;web&quot;, status=&quot;429&quot;, verb=&quot;POST&quot;}</div><div class="t" style="left:778.47px;top:900.50px;font-size:28px;line-height:28px;font-weight:700;color:#ccccdc;transform:scaleX(0.9315);transform-origin:left top;">Active Requests</div><div class="t" style="left:50.01px;top:965.40px;font-size:24px;line-height:24px;font-weight:400;color:#ccccdc;transform:scaleX(1.0443);transform-origin:left top;">100 req/s</div><div class="t" style="left:64.16px;top:1043.40px;font-size:24px;line-height:24px;font-weight:400;color:#ccccdc;transform:scaleX(1.0376);transform-origin:left top;">80 req/s</div><div class="t" style="left:64.16px;top:1121.40px;font-size:24px;line-height:24px;font-weight:400;color:#ccccdc;transform:scaleX(1.0376);transform-origin:left top;">60 req/s</div><div class="t" style="left:65.20px;top:1199.40px;font-size:24px;line-height:24px;font-weight:400;color:#ccccdc;transform:scaleX(1.0256);transform-origin:left top;">40 req/s</div><div class="t" style="left:64.16px;top:1277.50px;font-size:24px;line-height:24px;font-weight:400;color:#ccccdc;transform:scaleX(1.0376);transform-origin:left top;">20 req/s</div><div class="t" style="left:76.95px;top:1355.50px;font-size:24px;line-height:24px;font-weight:400;color:#ccccdc;transform:scaleX(1.0472);transform-origin:left top;">0 req/s</div><div class="t" style="left:383.00px;top:1384.90px;font-size:24px;line-height:24px;font-weight:400;color:#ccccdc;">16:25</div><div class="t" style="left:636.60px;top:1384.90px;font-size:24px;line-height:24px;font-weight:400;color:#ccccdc;">16:30</div><div class="t" style="left:890.20px;top:1384.90px;font-size:24px;line-height:24px;font-weight:400;color:#ccccdc;">16:35</div><div class="t" style="left:1143.80px;top:1384.90px;font-size:24px;line-height:24px;font-weight:400;color:#ccccdc;">16:40</div><div class="t" style="left:1397.40px;top:1384.90px;font-size:24px;line-height:24px;font-weight:400;color:#ccccdc;">16:45</div><div class="t" style="left:1651.00px;top:1384.90px;font-size:24px;line-height:24px;font-weight:400;color:#ccccdc;">16:50</div><div class="t" style="left:125.08px;top:1424.40px;font-size:24px;line-height:24px;font-weight:400;color:#ccccdc;transform:scaleX(1.0194);transform-origin:left top;">discourse_active_app_reqs{instance=&quot;discourse.dev.observiq.com:80&quot;, job=&quot;integration&quot;}</div><div class="t" style="left:2480.08px;top:900.50px;font-size:28px;line-height:28px;font-weight:700;color:#ccccdc;transform:scaleX(0.9237);transform-origin:left top;">Queued Requests</div><div class="t" style="left:1760.01px;top:965.40px;font-size:24px;line-height:24px;font-weight:400;color:#ccccdc;transform:scaleX(1.0443);transform-origin:left top;">100 req/s</div><div class="t" style="left:1774.16px;top:1043.40px;font-size:24px;line-height:24px;font-weight:400;color:#ccccdc;transform:scaleX(1.0376);transform-origin:left top;">80 req/s</div><div class="t" style="left:1774.16px;top:1121.40px;font-size:24px;line-height:24px;font-weight:400;color:#ccccdc;transform:scaleX(1.0376);transform-origin:left top;">60 req/s</div><div class="t" style="left:1775.20px;top:1199.40px;font-size:24px;line-height:24px;font-weight:400;color:#ccccdc;transform:scaleX(1.0256);transform-origin:left top;">40 req/s</div><div class="t" style="left:1774.16px;top:1277.50px;font-size:24px;line-height:24px;font-weight:400;color:#ccccdc;transform:scaleX(1.0376);transform-origin:left top;">20 req/s</div><div class="t" style="left:1786.95px;top:1355.50px;font-size:24px;line-height:24px;font-weight:400;color:#ccccdc;transform:scaleX(1.0472);transform-origin:left top;">0 req/s</div><div class="t" style="left:2093.30px;top:1384.90px;font-size:24px;line-height:24px;font-weight:400;color:#ccccdc;">16:25</div><div class="t" style="left:2346.90px;top:1384.90px;font-size:24px;line-height:24px;font-weight:400;color:#ccccdc;">16:30</div><div class="t" style="left:2600.50px;top:1384.90px;font-size:24px;line-height:24px;font-weight:400;color:#ccccdc;">16:35</div><div class="t" style="left:2854.10px;top:1384.90px;font-size:24px;line-height:24px;font-weight:400;color:#ccccdc;">16:40</div><div class="t" style="left:3107.70px;top:1384.90px;font-size:24px;line-height:24px;font-weight:400;color:#ccccdc;">16:45</div><div class="t" style="left:3361.30px;top:1384.90px;font-size:24px;line-height:24px;font-weight:400;color:#ccccdc;">16:50</div><div class="t" style="left:1836.10px;top:1424.40px;font-size:24px;line-height:24px;font-weight:400;color:#ccccdc;transform:scaleX(1.0214);transform-origin:left top;">{instance=&quot;discourse.dev.observiq.com:80&quot;, job=&quot;integration&quot;}</div><div class="t" style="left:1659.81px;top:1509.20px;font-size:28px;line-height:28px;font-weight:700;color:#ccccdc;transform:scaleX(0.9702);transform-origin:left top;">Page Views</div><div class="t" style="left:50.47px;top:1649.70px;font-size:24px;line-height:24px;font-weight:400;color:#ccccdc;transform:scaleX(1.0256);transform-origin:left top;">0.04 views/sec</div><div class="t" style="left:50.47px;top:1735.70px;font-size:24px;line-height:24px;font-weight:400;color:#ccccdc;transform:scaleX(1.0256);transform-origin:left top;">0.03 views/sec</div><div class="t" style="left:50.47px;top:1821.80px;font-size:24px;line-height:24px;font-weight:400;color:#ccccdc;transform:scaleX(1.0256);transform-origin:left top;">0.02 views/sec</div><div class="t" style="left:50.47px;top:1907.80px;font-size:24px;line-height:24px;font-weight:400;color:#ccccdc;transform:scaleX(1.0256);transform-origin:left top;">0.01 views/sec</div>
</body></html>
